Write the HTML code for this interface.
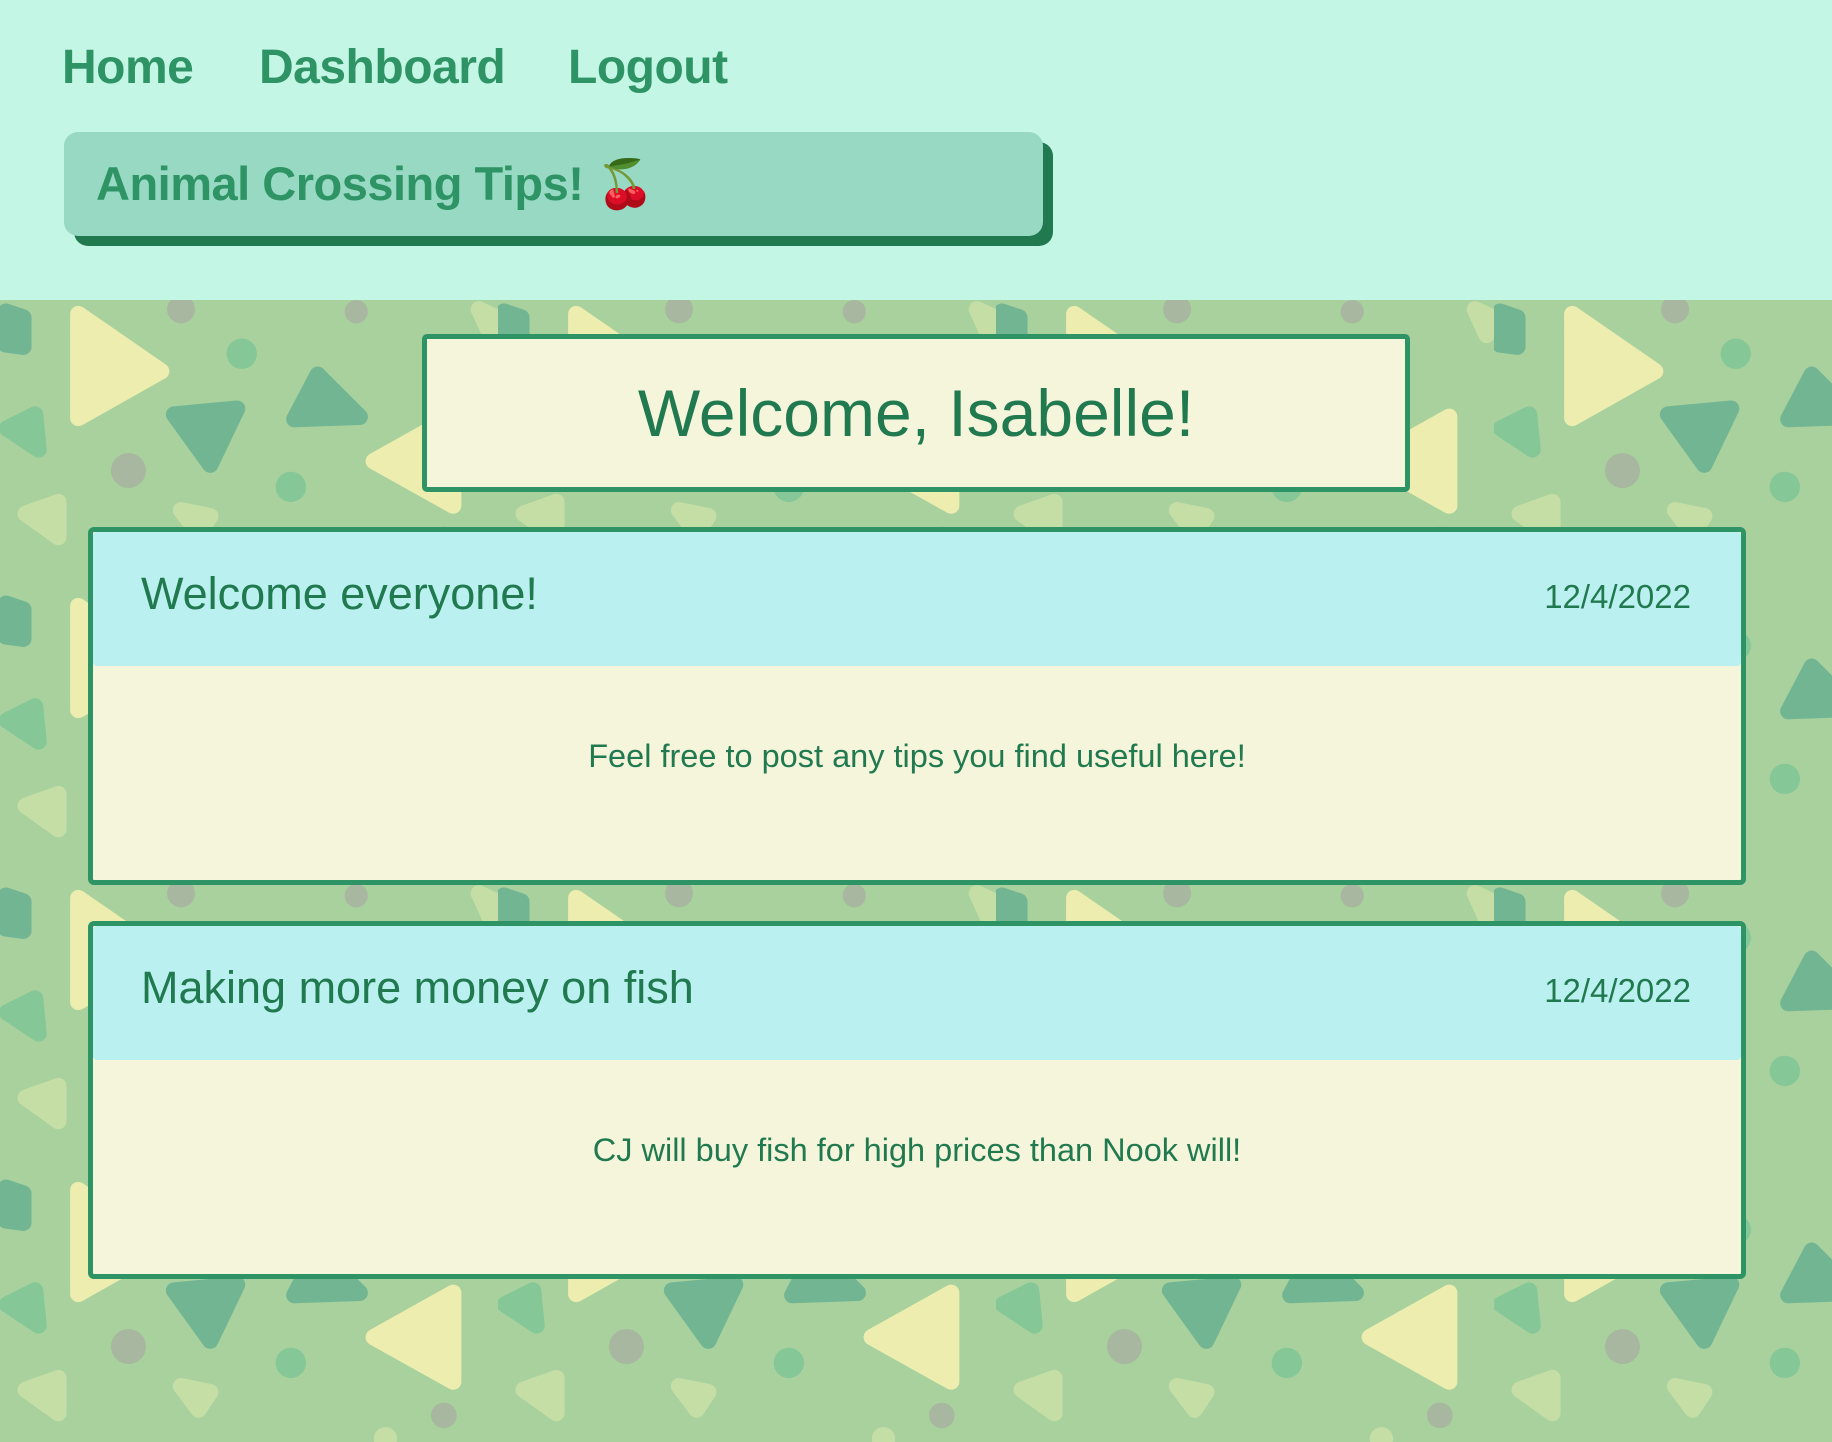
<!DOCTYPE html>
<html><head><meta charset="utf-8"><style>
*{margin:0;padding:0;box-sizing:border-box}
html,body{width:1832px;height:1442px;overflow:hidden}
body{background:#a8d19d;font-family:"Liberation Sans",sans-serif;position:relative;color:#217a4f}
#bg{position:absolute;left:0;top:300px;width:1832px;height:1142px}
nav{position:absolute;left:0;top:0;width:1832px;height:300px;background:#c4f6e6}
nav a{position:absolute;top:40px;font-weight:bold;font-size:48px;color:#2f9465;text-decoration:none;letter-spacing:-0.5px}
.title{position:absolute;left:64px;top:132px;width:979px;height:104px;background:#97d9c3;border-radius:14px;box-shadow:10px 10px 0 #217a4f;font-weight:bold;font-size:47px;color:#2f9465;padding:24px 0 0 32px;letter-spacing:-0.5px}
.welcome{position:absolute;left:422px;top:334px;width:988px;height:158px;background:#f5f5db;border:5px solid #2f9465;border-radius:5px;text-align:center;font-size:66px;line-height:148px;color:#217a4f}
.card{position:absolute;left:88px;width:1658px;height:358px;background:#f5f5db;border:5px solid #2f9465;border-radius:6px;overflow:hidden}
.hd{height:134px;background:#baf0f0;position:relative;border-radius:4px}
.hd h2{position:absolute;left:48px;top:36px;font-weight:normal;font-size:45px}
.hd span{position:absolute;right:50px;top:46px;font-size:33px}
.bd{text-align:center;font-size:32.5px;padding-top:72px}
</style></head><body>
<svg id="bg" xmlns="http://www.w3.org/2000/svg">
<defs><pattern id="p" width="498" height="292" patternUnits="userSpaceOnUse">
<g transform="scale(1.168)" stroke-linejoin="round" stroke-width="14">
<polygon points="67,12 67,101 138,61" fill="#ecedae" stroke="#ecedae"/>
<polygon points="149,98 203,93 180,141" fill="#72b592" stroke="#72b592"/>
<polygon points="252,102 272,64 308,100" fill="#72b592" stroke="#72b592"/>
<circle cx="155" cy="8" r="12" fill="#a8b79f"/>
<circle cx="207" cy="46" r="13" fill="#85c797"/>
<circle cx="110" cy="146" r="15" fill="#a8b79f"/>
<circle cx="249" cy="160" r="13" fill="#85c797"/>
<polygon points="22,183 50,173 50,203" fill="#c5dea5" stroke="#c5dea5"/>
<polygon points="6,110 30,98 33,128" fill="#85c797" stroke="#85c797"/>
<polygon points="320,138 388,100 388,176" fill="#ecedae" stroke="#ecedae"/>
<polygon points="155,180 180,185 170,200" fill="#c5dea5" stroke="#c5dea5"/>
<polygon points="5,10 20,15 20,40 5,38" fill="#72b592" stroke="#72b592"/>
<circle cx="305" cy="10" r="10" fill="#a8b79f"/>
<polygon points="410,8 425,15 420,30" fill="#c5dea5" stroke="#c5dea5"/>
<circle cx="380" cy="205" r="11" fill="#a8b79f"/>
<circle cx="330" cy="225" r="10" fill="#c5dea5"/>
</g></pattern></defs>
<rect width="1832" height="1142" fill="url(#p)"/>
</svg>
<nav>
<a style="left:62px">Home</a>
<a style="left:259px">Dashboard</a>
<a style="left:568px">Logout</a>
<div class="title">Animal Crossing Tips! 🍒</div>
</nav>
<div class="welcome">Welcome, Isabelle!</div>
<div class="card" style="top:527px"><div class="hd"><h2>Welcome everyone!</h2><span>12/4/2022</span></div><div class="bd">Feel free to post any tips you find useful here!</div></div>
<div class="card" style="top:921px"><div class="hd"><h2>Making more money on fish</h2><span>12/4/2022</span></div><div class="bd">CJ will buy fish for high prices than Nook will!</div></div>
</body></html>
